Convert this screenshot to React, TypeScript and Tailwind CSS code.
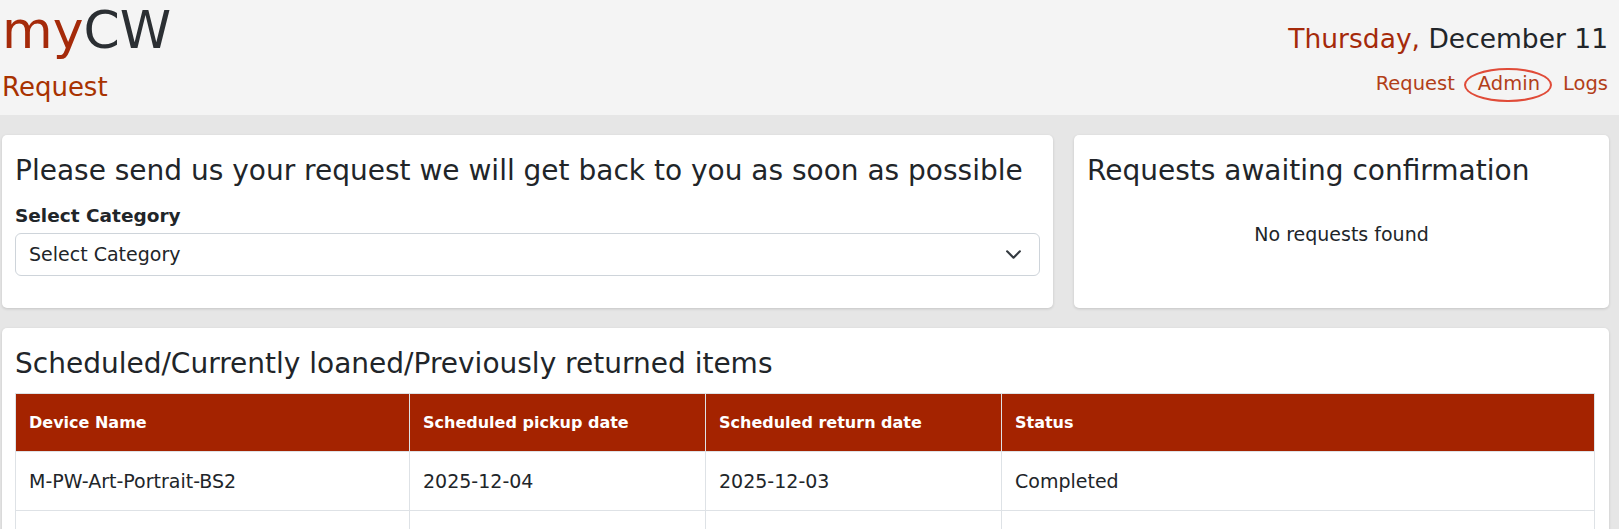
interface Loan {
  device: string;
  pickup: string;
  returnDate: string;
  status: string;
}

const loans: Loan[] = [
  { device: 'M-PW-Art-Portrait-BS2', pickup: '2025-12-04', returnDate: '2025-12-03', status: 'Completed' },
  { device: 'M-PW-Art-Portrait-BS1', pickup: '2025-11-20', returnDate: '2025-11-27', status: 'Completed' },
];

export default function App() {
  return (
    <div className="min-h-screen bg-[#e6e6e6] font-['DejaVu_Sans',sans-serif] text-[#212529]">
      {/* top bar */}
      <header className="h-[115px] bg-[#f4f4f4] flex justify-between pl-[2px] pr-[11px]">
        <div>
          <h1 className="mt-[4px] text-[52px] leading-none">
            <span className="text-[#a52a0a]">my</span>
            <span className="text-[#2b2f33]">CW</span>
          </h1>
          <div className="mt-[18px] text-[26px] leading-none text-[#a83200]">Request</div>
        </div>
        <div className="flex flex-col items-end">
          <div className="mt-[26px] text-[26.5px] leading-none">
            <span className="text-[#a52a0a]">Thursday,</span> <span className="text-[#212529]">December 11</span>
          </div>
          <nav className="mt-[21px] flex gap-[23px] text-[19.5px] leading-none text-[#b23e18]">
            <a href="#">Request</a>
            <a href="#" className="relative">
              Admin
              <span className="absolute -left-[14px] -right-[12px] -top-[6px] -bottom-[9px] rounded-[50%] border-[2.5px] border-[#e04b38]" />
            </a>
            <a href="#">Logs</a>
          </nav>
        </div>
      </header>

      <main className="pl-[2px] pr-[10px] pt-[20px] flex flex-col gap-[20px]">
        <div className="grid grid-cols-[1051px_1fr] gap-[21px]">
          <section className="h-[173px] bg-white rounded-[5px] shadow-[0_1px_3px_rgba(0,0,0,0.15)] px-[13px] pt-[22px]">
            <h3 className="text-[28px] leading-none">
              Please send us your request we will get back to you as soon as possible
            </h3>
            <label className="block mt-[22px] text-[18.5px] leading-none font-bold">Select Category</label>
            <div className="mt-[7px] h-[43px] rounded-[6px] border border-[#ced4da] flex items-center justify-between pl-[13px] pr-[17px] text-[19px]">
              <span>Select Category</span>
              <svg viewBox="0 0 16 16" className="w-[17px] h-[17px]" fill="none" stroke="#343a40" strokeWidth="2" strokeLinecap="round" strokeLinejoin="round">
                <path d="m2 5 6 6 6-6" />
              </svg>
            </div>
          </section>

          <section className="h-[173px] bg-white rounded-[5px] shadow-[0_1px_3px_rgba(0,0,0,0.15)] px-[13px] pt-[22px]">
            <h3 className="text-[28px] leading-none">Requests awaiting confirmation</h3>
            <p className="mt-[40px] text-center text-[19px] leading-none">No requests found</p>
          </section>
        </div>

        <section className="bg-white rounded-[5px] shadow-[0_1px_3px_rgba(0,0,0,0.15)] pl-[13px] pr-[14px] pt-[22px] pb-[16px]">
          <h3 className="text-[28px] leading-none">Scheduled/Currently loaned/Previously returned items</h3>
          <table className="mt-[15px] w-full border-collapse border border-[#dee2e6]">
            <thead>
              <tr className="h-[58px] bg-[#a42300] text-white text-[16px] font-bold text-left">
                <th className="w-[394px] px-[13px] border border-[#dee2e6]">Device Name</th>
                <th className="w-[296px] px-[13px] border border-[#dee2e6]">Scheduled pickup date</th>
                <th className="w-[296px] px-[13px] border border-[#dee2e6]">Scheduled return date</th>
                <th className="px-[13px] border border-[#dee2e6]">Status</th>
              </tr>
            </thead>
            <tbody>
              {loans.map((loan) => (
                <tr key={loan.device} className="h-[59px] text-[19px]">
                  <td className="px-[13px] border border-[#dee2e6]">{loan.device}</td>
                  <td className="px-[13px] border border-[#dee2e6]">{loan.pickup}</td>
                  <td className="px-[13px] border border-[#dee2e6]">{loan.returnDate}</td>
                  <td className="px-[13px] border border-[#dee2e6]">{loan.status}</td>
                </tr>
              ))}
            </tbody>
          </table>
        </section>
      </main>
    </div>
  );
}
